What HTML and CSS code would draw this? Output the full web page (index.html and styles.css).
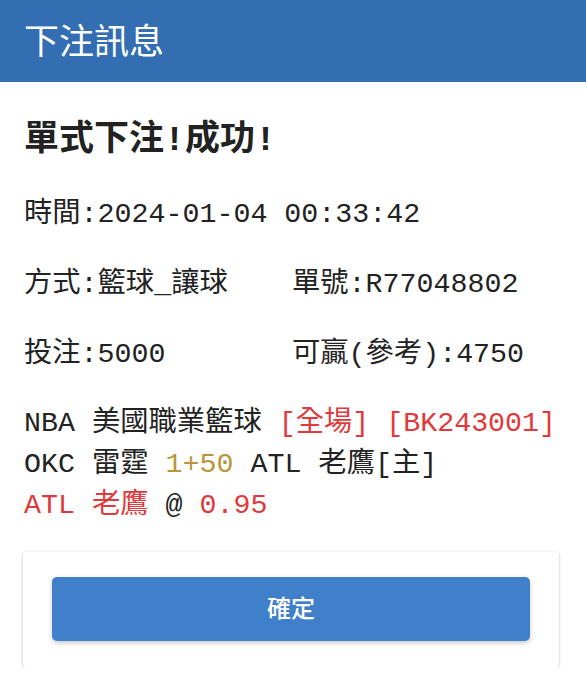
FILE: index.html
```html
<!DOCTYPE html>
<html lang="zh-Hant">
<head>
<meta charset="utf-8">
<title>下注訊息</title>
<link rel="stylesheet" href="styles.css">
</head>
<body>
<header class="topbar">
  <h1 class="topbar-title">下注訊息</h1>
</header>
<main class="content">
  <h2 class="result-title">單式下注!成功!</h2>
  <div class="info-grid">
    <div class="info-item info-wide">時間:2024-01-04 00:33:42</div>
    <div class="info-item">方式:籃球_讓球</div>
    <div class="info-item">單號:R77048802</div>
    <div class="info-item">投注:5000</div>
    <div class="info-item">可贏(參考):4750</div>
  </div>
  <div class="match">
    <div class="match-line">NBA 美國職業籃球 <span class="red">[全場]</span> <span class="red">[BK243001]</span></div>
    <div class="match-line">OKC 雷霆 <span class="gold">1+50</span> ATL 老鷹[主]</div>
    <div class="match-line"><span class="red">ATL 老鷹</span> @ <span class="red">0.95</span></div>
  </div>
</main>
<section class="action-card">
  <button class="confirm-btn" type="button">確定</button>
</section>
</body>
</html>
```
FILE: styles.css
```css
html, body {
  margin: 0;
  padding: 0;
  background: #ffffff;
}
body {
  font-family: "Liberation Mono", "Noto Sans CJK TC", monospace;
  color: #222222;
  width: 586px;
}
.topbar {
  height: 82px;
  background: #336eb2;
  display: flex;
  align-items: center;
  padding: 0 24px 5px;
  box-sizing: border-box;
}
.topbar-title {
  margin: 0;
  font-family: "Noto Sans CJK TC", sans-serif;
  font-weight: 400;
  font-size: 35px;
  line-height: 40px;
  color: #ffffff;
}
.content {
  padding: 35px 24px 0;
}
.result-title {
  margin: 0;
  font-size: 35px;
  font-weight: 700;
  line-height: 48px;
  color: #222222;
}
.info-grid {
  margin-top: 29px;
  display: grid;
  grid-template-columns: 268px 1fr;
  row-gap: 30px;
  font-size: 28.3px;
  line-height: 40px;
}
.info-wide {
  grid-column: 1 / span 2;
}
.info-item {
  white-space: nowrap;
}
.match {
  margin-top: 29px;
  font-size: 28.3px;
  line-height: 41px;
}
.match-line {
  white-space: nowrap;
}
.red {
  color: #e0393b;
}
.gold {
  color: #b8963a;
}
.action-card {
  margin: 26px 27px 0 23px;
  padding: 25px 29px 26px;
  background: #ffffff;
  border-radius: 3px;
  box-shadow: 0 1px 3px rgba(0, 0, 0, 0.28), 0 0 1px rgba(0, 0, 0, 0.08);
}
.confirm-btn {
  display: block;
  width: 100%;
  height: 64px;
  padding: 0 0 5px;
  border: none;
  border-radius: 5px;
  background: #4080cb;
  color: #ffffff;
  font-family: "Noto Sans CJK TC", sans-serif;
  font-size: 24px;
  font-weight: 500;
  box-shadow: 0 2px 5px rgba(0, 0, 0, 0.22);
  cursor: pointer;
}
```
